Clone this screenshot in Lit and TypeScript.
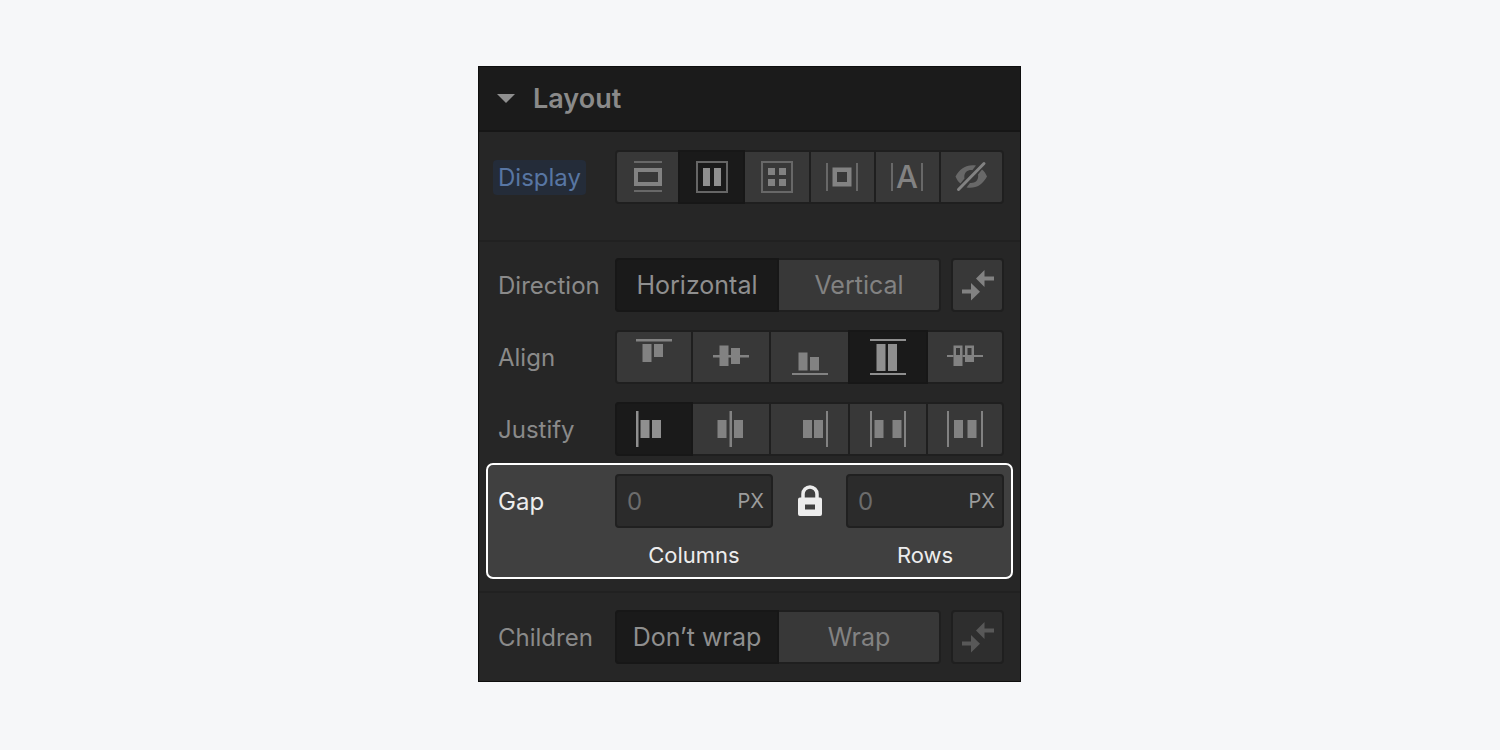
import { LitElement, html, css, svg } from "lit";
import { customElement, state } from "lit/decorators.js";

const icon = (body: unknown) => html`<svg class="icon" viewBox="0 0 36 36" aria-hidden="true">${body}</svg>`;

const displayIcons = [
  { name: "Block", art: svg`<path class="dim" d="M4 2h28v2H4zM4 31h28v2H4z"/><path d="M4 9h28v18H4zM8 13v10h20V13z" fill-rule="evenodd"/>` },
  { name: "Flex", art: svg`<path class="dim" d="M2 2h32v32H2zM4 4v28h28V4z" fill-rule="evenodd"/><path d="M9 9h7v18H9zM20 9h7v18h-7z"/>` },
  { name: "Grid", art: svg`<path class="dim" d="M2 2h32v32H2zM4 4v28h28V4z" fill-rule="evenodd"/><path d="M9 9h7v7H9zM20 9h7v7h-7zM9 20h7v7H9zM20 20h7v7h-7z"/>` },
  { name: "Inline block", art: svg`<path class="dim" d="M2 4h2v28H2zM32 4h2v28h-2z"/><path d="M8.5 8.5h19v19h-19zM13 13v10h10V13z" fill-rule="evenodd"/>` },
  { name: "Inline", art: svg`<path class="dim" d="M2 4h2v28H2zM32 4h2v28h-2z"/><text x="18" y="29" text-anchor="middle">A</text>` },
  { name: "None", art: svg`<g class="dim"><path d="M2.5 17.5C7 9 14 5 23 6.5L19.5 11C14 10.5 10.5 14 11.5 19.5L7.5 24.5C5 22.5 3.5 20 2.5 17.5z"/><path transform="rotate(180 18.25 17.5)" d="M2.5 17.5C7 9 14 5 23 6.5L19.5 11C14 10.5 10.5 14 11.5 19.5L7.5 24.5C5 22.5 3.5 20 2.5 17.5z"/></g><path d="M5.5 30.5L31 4.5" stroke="currentColor" stroke-width="3" stroke-linecap="round"/>` },
];

const alignIcons = [
  { name: "Start", art: svg`<path d="M0 0h36v2.5H0zM6.5 5h9v18h-9zM18 5h9v13h-9z"/>` },
  { name: "Center", art: svg`<path d="M0 16h36v2.5H0zM6.5 6.5h9v20.5h-9zM18 9h9v16h-9z"/>` },
  { name: "End", art: svg`<path d="M0 34h36v2H0zM6.5 13.5h9v18h-9zM18 18h9v13.5h-9z"/>` },
  { name: "Stretch", art: svg`<path d="M0 0h36v2H0zM0 34h36v2H0zM6.5 5h9v27h-9zM18 5h9v27h-9z"/>` },
  { name: "Baseline", art: svg`<path d="M0 16h6.5v2H0zM15.5 16H18v2h-2.5zM27 16h9v2h-9z"/><path d="M6.5 6.5h9V27h-9zM9 9v7h4V9zM18 6.5h9V23h-9zM20.5 9v7h4V9z" fill-rule="evenodd"/>` },
];

const justifyIcons = [
  { name: "Start", art: svg`<path d="M0 0h2.5v36H0zM4.5 9h9v18h-9zM16 9h9v18h-9z"/>` },
  { name: "Center", art: svg`<path d="M16.5 0h2.5v36h-2.5zM4.5 9h9v18h-9zM21 9h9v18h-9z"/>` },
  { name: "End", art: svg`<path d="M34 0h2v36h-2zM11 9h9v18h-9zM22 9h9v18h-9z"/>` },
  { name: "Space between", art: svg`<path d="M0 0h2v36H0zM34 0h2v36h-2zM4.5 9h9v18h-9zM22.5 9h9v18h-9z"/>` },
  { name: "Space around", art: svg`<path d="M0 0h2v36H0zM34 0h2v36h-2zM7 9h9v18H7zM20.5 9h9v18h-9z"/>` },
];

const swapArt = svg`<path d="M16 11.5L24.5 3v6.5H34v4h-9.5V20zM2 22.5h9V16l9 8.7-9 8.8v-7H2z"/>`;

@customElement("app-root")
export class AppRoot extends LitElement {
  static styles = css`
    :host {
      display: flex;
      justify-content: center;
      box-sizing: border-box;
      min-height: 100vh;
      padding: 66px 25px 66px 24px;
      background: #f6f7f9;
      color: #8a8a8a;
      font: 24px/31px Inter, sans-serif;
    }
    * { box-sizing: border-box; }
    button, input { font: inherit; color: inherit; margin: 0; }
    button { border: 0; padding: 0; cursor: pointer; }
    .panel {
      align-self: flex-start;
      width: 100%;
      max-width: 543px;
      background: #262626;
      border: 1px solid #0e0e0e;
    }
    .title {
      display: flex;
      align-items: center;
      gap: 18px;
      width: 100%;
      height: 65px;
      padding: 0 18px;
      background: #1b1b1b;
      border-bottom: 2px solid #161616;
      font-size: 27px;
      font-weight: 600;
    }
    .caret { width: 18px; height: 9px; fill: #8f8f8f; }
    .section { display: grid; gap: 18px; padding: 17px 16px 17px 19px; }
    .section.display { padding: 18px 16px 36px 19px; }
    .section.flow { padding: 16px 16px 7px 19px; }
    .divided { border-bottom: 2px solid #212121; }
    .row { display: grid; grid-template-columns: 117px 1fr; align-items: center; }
    .label { justify-self: start; }
    .tag {
      margin-left: -5px;
      padding: 2px 5px;
      border-radius: 4px;
      background: #242c39;
      color: #5876a3;
    }
    .pair { display: grid; grid-template-columns: 1fr 53px; gap: 10px; }
    .group {
      display: flex;
      gap: 2px;
      height: 54px;
      padding: 2px;
      border-radius: 4px;
      background: #1f1f1f;
    }
    .option {
      display: flex;
      flex: 30 1 0;
      align-items: center;
      justify-content: center;
      background: #383838;
      color: #828282;
      font-size: 25px;
      line-height: 30px;
    }
    .option:first-child, .option:last-child { flex-grow: 29; }
    .option:first-child { border-radius: 2px 0 0 2px; }
    .option:last-child { border-radius: 0 2px 2px 0; }
    .option:only-child { border-radius: 2px; }
    .option.on { background: #1a1a1a; color: #8f8f8f; box-shadow: 0 0 0 2px #171717; }
    .option:disabled { background: #2e2e2e; color: #585858; cursor: default; }
    .icon { width: 36px; height: 36px; fill: currentColor; overflow: visible; }
    .icon .dim { opacity: 0.65; }
    .icon text { font-size: 31px; font-weight: 500; }
    .gap {
      display: grid;
      grid-template-columns: 117px minmax(0, 1fr) 73px minmax(0, 1fr);
      row-gap: 13px;
      align-items: center;
      margin: 0 7px 12px;
      padding: 9px 7px 8px 10px;
      border: 2px solid #fff;
      border-radius: 7px;
      background: #404040;
      color: #ededed;
    }
    .field {
      display: flex;
      align-items: center;
      height: 54px;
      padding: 0 7px 0 10px;
      border: 2px solid #202020;
      border-radius: 4px;
      background: #2b2b2b;
      color: #9c9c9c;
    }
    .number {
      flex: 1;
      min-width: 0;
      padding: 0;
      border: 0;
      outline: 0;
      background: none;
      color: #6c6c6c;
    }
    .unit { font-size: 20px; }
    .lock { display: flex; justify-content: center; background: none; color: #ededed; }
    .lock-art { width: 24px; height: 32px; }
    .caption { font-size: 22px; line-height: 28px; text-align: center; }
    .columns { grid-column: 2; }
    .rows { grid-column: 4; }
  `;

  @state() private display = 1;
  @state() private direction = 0;
  @state() private align = 3;
  @state() private justify = 0;
  @state() private wrap = 0;

  private icons(label: string, items: { name: string; art: unknown }[], current: number, pick: (i: number) => void) {
    return html`<div class="group" role="group" aria-label=${label}>
      ${items.map((item, i) => html`<button class="option ${i === current ? "on" : ""}" aria-label=${item.name}
        aria-pressed=${i === current} @click=${() => pick(i)}>${icon(item.art)}</button>`)}
    </div>`;
  }

  private words(label: string, items: string[], current: number, pick: (i: number) => void, locked = false) {
    return html`<div class="pair">
      <div class="group" role="group" aria-label=${label}>
        ${items.map((item, i) => html`<button class="option ${i === current ? "on" : ""}"
          aria-pressed=${i === current} @click=${() => pick(i)}>${item}</button>`)}
      </div>
      <div class="group"><button class="option" aria-label="Reverse" ?disabled=${locked}>${icon(swapArt)}</button></div>
    </div>`;
  }

  render() {
    return html`<main class="panel">
      <button class="title" aria-expanded="true">
        <svg class="caret" viewBox="0 0 18 9" aria-hidden="true"><path d="M0 0h18L9 9z"/></svg>Layout
      </button>
      <section class="section display divided">
        <div class="row"><span class="label tag">Display</span>
          ${this.icons("Display", displayIcons, this.display, (i) => (this.display = i))}</div>
      </section>
      <div class="divided">
        <section class="section flow">
          <div class="row"><span class="label">Direction</span>
            ${this.words("Direction", ["Horizontal", "Vertical"], this.direction, (i) => (this.direction = i))}</div>
          <div class="row"><span class="label">Align</span>
            ${this.icons("Align", alignIcons, this.align, (i) => (this.align = i))}</div>
          <div class="row"><span class="label">Justify</span>
            ${this.icons("Justify", justifyIcons, this.justify, (i) => (this.justify = i))}</div>
        </section>
        <section class="gap">
          <span>Gap</span>
          <div class="field"><input class="number" id="columns" value="0" inputmode="numeric"><span class="unit">PX</span></div>
          <button class="lock" aria-label="Lock gap">
            <svg class="lock-art" viewBox="0 0 24 32" aria-hidden="true">
              <path d="M5 15V9a7 7 0 0 1 14 0v6" fill="none" stroke="currentColor" stroke-width="3.5"/>
              <path d="M2 12.5h20a2 2 0 0 1 2 2V29a2 2 0 0 1-2 2H2a2 2 0 0 1-2-2V14.5a2 2 0 0 1 2-2zM7 19.5v5h10v-5z" fill="currentColor" fill-rule="evenodd"/>
            </svg>
          </button>
          <div class="field"><input class="number" id="rows" value="0" inputmode="numeric"><span class="unit">PX</span></div>
          <label class="caption columns" for="columns">Columns</label>
          <label class="caption rows" for="rows">Rows</label>
        </section>
      </div>
      <section class="section">
        <div class="row"><span class="label">Children</span>
          ${this.words("Children", ["Don’t wrap", "Wrap"], this.wrap, (i) => (this.wrap = i), true)}</div>
      </section>
    </main>`;
  }
}
